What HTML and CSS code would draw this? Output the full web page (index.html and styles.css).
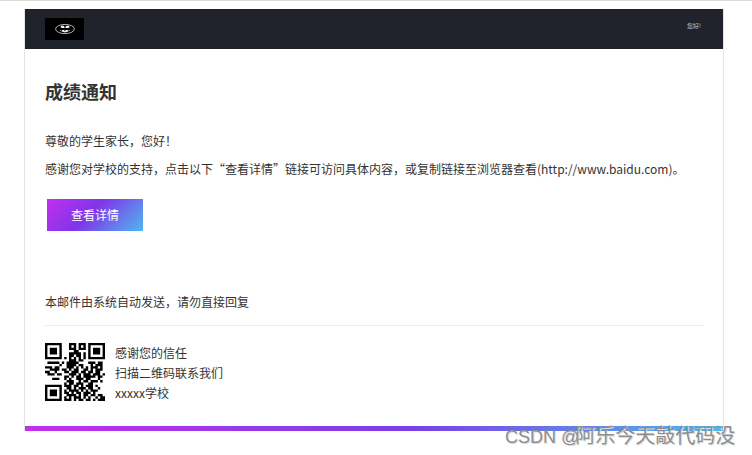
FILE: index.html
```html
<!DOCTYPE html>
<html lang="zh">
<head>
<meta charset="utf-8">
<title>成绩通知</title>
<link rel="stylesheet" href="styles.css">
</head>
<body>
<div class="card">
  <header class="top">
    <div class="logo">
      <svg width="20" height="12" viewBox="0 0 20 12"><ellipse cx="10" cy="6" rx="9.400" ry="4.600" fill="#000" stroke="#c4c4c4" stroke-width=".9"/><path d="M6 2.800h2.500l.8 1h1.400l.8-1H14l.6 1.700-2 .5h-5l-2-.5zM4.500 7h11l-2.500 1.500-3 1-3-1z" fill="#fff"/><path d="M9.500 3.200h1v5h-1zM5.500 8l1-1 1 1zM12.500 8l1-1 1 1z" fill="#000"/></svg>
    </div>
    <span class="hello">您好!</span>
  </header>
  <main class="body">
    <h1>成绩通知</h1>
    <p class="greet">尊敬的学生家长，您好！</p>
    <p class="desc">感谢您对学校的支持，点击以下“查看详情”链接可访问具体内容，或复制链接至浏览器查看(http://www.baidu.com)。</p>
    <a class="btn">查看详情</a>
    <p class="auto">本邮件由系统自动发送，请勿直接回复</p>
    <div class="foot">
      <svg class="qr" width="60" height="58" viewBox="0 0 25 25" preserveAspectRatio="none"><path fill-rule="evenodd" d="M0 0h7v7H0zM1 1v5h5V1zM2 2h3v3H2zM18 0h7v7h-7zM19 1v5h5V1zM20 2h3v3h-3zM0 18h7v7H0zM1 19v5h5v-5zM2 20h3v3H2z"/><path fill="none" stroke="#000" d="M10 .5h3M14 .5h3M10 1.500h1M12 1.500h1M14 1.500h1M16 1.500h1M10 2.500h3M14 2.500h3M12 3.500h2M10 4.500h5M16 4.500h1M10 5.500h2M13 5.500h2M16 5.500h1M8 6.500h1M10 6.500h1M12 6.500h1M14 6.500h1M16 6.500h1M10 7.500h3M14 7.500h2M1 8.500h5M7 8.500h1M9 8.500h5M18 8.500h3M22 8.500h2M6 9.500h1M9 9.500h4M14 9.500h2M19 9.500h1M21 9.500h3M0 10.500h3M4 10.500h2M9 10.500h3M13 10.500h1M15 10.500h1M17 10.500h1M19 10.500h3M23 10.500h1M2 11.500h4M7 11.500h2M10 11.500h1M12 11.500h2M16 11.500h2M19 11.500h1M21 11.500h3M0 12.500h2M4 12.500h1M8 12.500h2M11 12.500h3M15 12.500h2M18 12.500h2M21 12.500h2M1 13.500h3M5 13.500h2M10 13.500h3M14 13.500h1M16 13.500h3M20 13.500h3M24 13.500h1M8 14.500h2M11 14.500h1M13 14.500h2M16 14.500h5M22 14.500h2M3 15.500h3M8 15.500h1M10 15.500h1M13 15.500h3M17 15.500h2M22 15.500h1M9 16.500h3M14 16.500h1M16 16.500h2M19 16.500h3M23 16.500h1M8 17.500h1M10 17.500h2M13 17.500h3M18 17.500h2M8 18.500h3M12 18.500h2M15 18.500h1M17 18.500h3M21 18.500h1M9 19.500h2M12 19.500h1M14 19.500h3M18 19.500h2M22 19.500h1M8 20.500h1M10 20.500h4M15 20.500h1M17 20.500h1M19 20.500h3M8 21.500h2M11 21.500h1M13 21.500h2M16 21.500h3M20 21.500h1M9 22.500h4M14 22.500h1M16 22.500h2M19 22.500h2M22 22.500h2M8 23.500h1M10 23.500h1M12 23.500h3M16 23.500h1M18 23.500h1M21 23.500h1M23 23.500h2M8 24.500h3M12 24.500h1M14 24.500h2M17 24.500h2M20 24.500h1M22 24.500h3"/></svg>
      <div class="thanks">
        <p>感谢您的信任</p>
        <p>扫描二维码联系我们</p>
        <p>xxxxx学校</p>
      </div>
    </div>
  </main>
  <div class="bar"></div>
</div>
<span class="mark">CSDN @<span class="mark-cn">阿乐今天敲代码没</span></span>
</body>
</html>
```
FILE: styles.css
```css
html, body { margin: 0; padding: 0; }
body {
  position: relative;
  width: 752px;
  height: 455px;
  overflow: hidden;
  background: #fff;
  border-top: 1px solid #dcdcdc;
  box-sizing: border-box;
  padding: 8px 0 0 24px;
  font-family: "Noto Sans CJK SC", "Liberation Sans", sans-serif;
  color: #333;
}
p { margin: 0; }
.card {
  width: 700px;
  height: 422px;
  box-sizing: border-box;
  border-left: 1px solid #e4e5e9;
  border-right: 1px solid #e4e5e9;
  display: flex;
  flex-direction: column;
}
.top {
  height: 40px;
  box-sizing: border-box;
  flex: none;
  background: #20232c;
  display: flex;
  align-items: flex-start;
  justify-content: space-between;
  padding: 9px 22px 0 20px;
}
.logo {
  width: 39px;
  height: 22px;
  background: #000;
  display: flex;
  align-items: center;
  justify-content: center;
}
.hello {
  margin-top: 4px;
  font-size: 6px;
  line-height: 8px;
  color: #c5cbd8;
}
.body {
  flex: 1;
  padding: 0 19px 0 20px;
  display: flex;
  flex-direction: column;
  align-items: flex-start;
}
h1 {
  margin: 29px 0 0;
  font-size: 18px;
  line-height: 26px;
  font-weight: 700;
  color: #333;
}
.greet, .desc, .auto, .thanks p {
  font-size: 12px;
  line-height: 20px;
}
.greet { margin-top: 27px; }
.desc { margin-top: 8px; white-space: nowrap; }
.btn {
  margin: 20px 0 0 2px;
  width: 96px;
  height: 32px;
  background: linear-gradient(135deg, #c030ef 0%, #8035e8 45%, #4fb8f0 100%);
  color: #fff;
  font-size: 12px;
  line-height: 32px;
  text-align: center;
}
.auto { margin-top: 61px; }
.foot {
  margin-top: 13px;
  align-self: stretch;
  border-top: 1px solid #ececec;
  padding-top: 17px;
  display: flex;
  gap: 10px;
}
.qr { flex: none; }
.thanks { margin-top: 0; }
.bar {
  height: 5px;
  flex: none;
  background: linear-gradient(90deg, #c030ef 0%, #7c3ee6 55%, #4fb8f0 100%);
}
.mark {
  position: absolute;
  left: 505px;
  top: 422px;
  font-family: "Liberation Sans", "Noto Sans CJK SC", sans-serif;
  font-size: 18px;
  line-height: 26px;
  color: #8e8e8e;
  white-space: nowrap;
  text-shadow: 1px 1px 0 #dcdcdc;
}
.mark-cn { font-size: 20px; margin-left: -4px; }
```
